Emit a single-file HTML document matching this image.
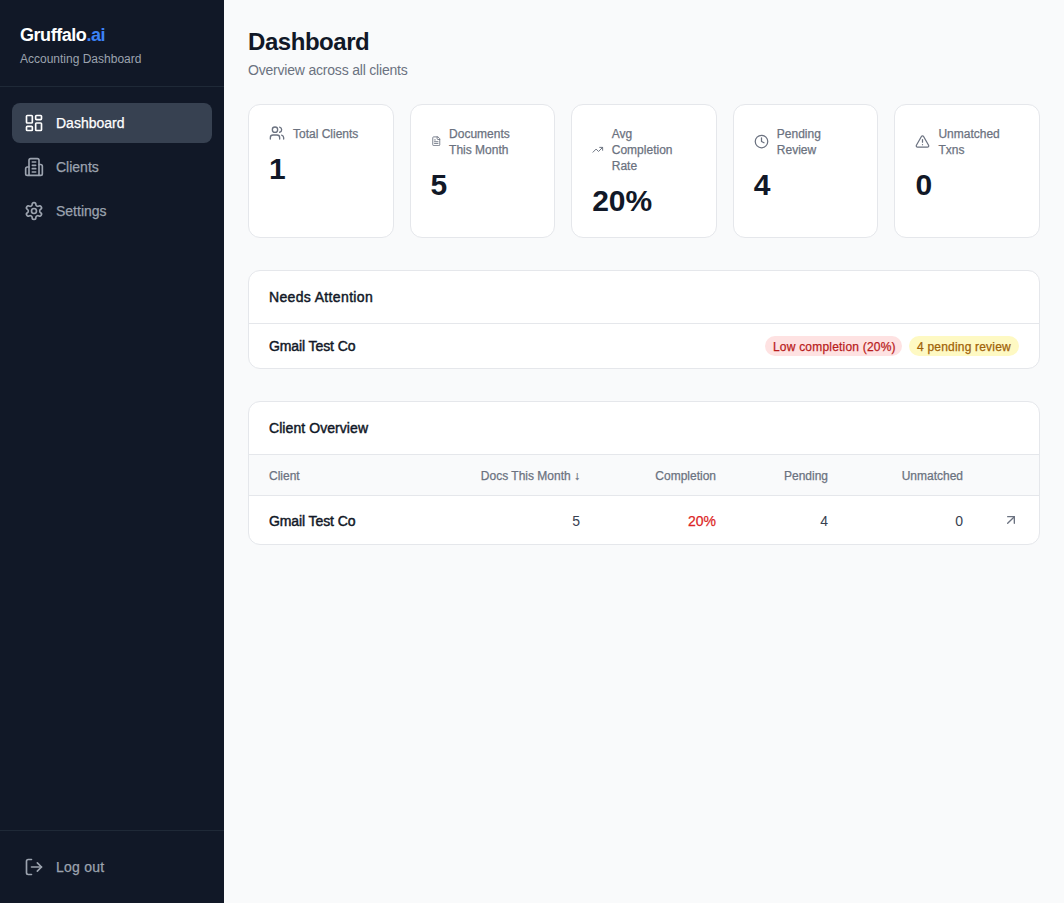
<!DOCTYPE html>
<html>
<head>
<meta charset="utf-8">
<style>
*{box-sizing:border-box;margin:0;padding:0}
html,body{width:1064px;height:903px;overflow:hidden}
body{font-family:"Liberation Sans",sans-serif;background:#f9fafb;color:#111827;position:relative}
svg{display:block;fill:none;stroke:currentColor;stroke-width:2;stroke-linecap:round;stroke-linejoin:round}
.sb{position:absolute;left:0;top:0;width:224px;height:903px;background:#111827}
.brand{position:absolute;left:20px;top:21px;letter-spacing:-0.45px;font-size:18px;line-height:28px;font-weight:bold;color:#fff}
.brand span{color:#3b82f6}
.tag{position:absolute;left:20px;top:51px;font-size:12px;line-height:16px;color:#9ca3af}
.hr1{position:absolute;left:0;top:86px;width:224px;height:1px;background:#1f2937}
.nav{position:absolute;left:12px;width:200px;height:40px;border-radius:8px;color:#9ca3af;font-size:14px;line-height:20px}
.nav.act{background:#374151;color:#fff}
.nav svg{position:absolute;left:12px;top:10px;width:20px;height:20px}
.nav .t{position:absolute;left:44px;top:10px;white-space:nowrap;-webkit-text-stroke:0.25px currentColor}
.hr2{position:absolute;left:0;top:830px;width:224px;height:1px;background:#1f2937}

.main{position:absolute;left:224px;top:0;width:840px;height:903px}
.h1{position:absolute;left:24px;top:26px;letter-spacing:-0.45px;font-size:24px;line-height:32px;font-weight:bold;color:#111827;white-space:nowrap}
.sub{position:absolute;left:24px;top:60px;letter-spacing:-0.2px;font-size:14px;line-height:20px;color:#6b7280;white-space:nowrap}

.card{position:absolute;top:104px;height:134px;background:#fff;border:1px solid #e5e7eb;border-radius:12px}
.card .lab{position:absolute;left:20px;top:21px;font-size:12px;line-height:16px;color:#6b7280}
.card .lab svg{position:absolute;color:#6b7280}
.card .lab .tx{position:absolute;white-space:nowrap;-webkit-text-stroke:0.25px currentColor}
.card .num{position:absolute;left:20px;font-size:30px;line-height:36px;font-weight:bold;color:#111827}

.panel{position:absolute;left:24px;width:792px;background:#fff;border:1px solid #e5e7eb;border-radius:12px;overflow:hidden}
.ph{position:absolute;left:20px;top:16px;font-size:14px;line-height:20px;-webkit-text-stroke:0.45px currentColor;color:#111827;white-space:nowrap}
.div{position:absolute;left:0;width:790px;height:1px;background:#e5e7eb}
.rowname{position:absolute;left:20px;font-size:14px;line-height:20px;-webkit-text-stroke:0.45px currentColor;letter-spacing:-0.1px;color:#111827;white-space:nowrap}
.badge{position:absolute;top:12px;height:20px;border-radius:10px;font-size:12px;line-height:20px;padding:1px 8px 0;white-space:nowrap;letter-spacing:0.2px;-webkit-text-stroke:0.25px currentColor}
.thead{position:absolute;left:0;top:53px;width:790px;height:40px;background:#f9fafb}
.th{position:absolute;top:13px;-webkit-text-stroke:0.25px currentColor;font-size:12px;line-height:16px;color:#6b7280;white-space:nowrap}
.td{position:absolute;font-size:14px;line-height:20px;color:#374151;white-space:nowrap}
</style>
</head>
<body>
<div class="sb">
  <div class="brand">Gruffalo<span>.ai</span></div>
  <div class="tag">Accounting Dashboard</div>
  <div class="hr1"></div>

  <div class="nav act" style="top:103px">
    <svg viewBox="0 0 24 24"><rect width="7" height="9" x="3" y="3" rx="1"/><rect width="7" height="5" x="14" y="3" rx="1"/><rect width="7" height="9" x="14" y="12" rx="1"/><rect width="7" height="5" x="3" y="16" rx="1"/></svg>
    <div class="t">Dashboard</div>
  </div>
  <div class="nav" style="top:147px">
    <svg viewBox="0 0 24 24"><path d="M6 22V4a2 2 0 0 1 2-2h8a2 2 0 0 1 2 2v18Z"/><path d="M6 12H4a2 2 0 0 0-2 2v6a2 2 0 0 0 2 2h2"/><path d="M18 9h2a2 2 0 0 1 2 2v9a2 2 0 0 1-2 2h-2"/><path d="M10 6h4"/><path d="M10 10h4"/><path d="M10 14h4"/><path d="M10 18h4"/></svg>
    <div class="t">Clients</div>
  </div>
  <div class="nav" style="top:191px">
    <svg viewBox="0 0 24 24"><path d="M12.22 2h-.44a2 2 0 0 0-2 2v.18a2 2 0 0 1-1 1.73l-.43.25a2 2 0 0 1-2 0l-.15-.08a2 2 0 0 0-2.73.73l-.22.38a2 2 0 0 0 .73 2.73l.15.1a2 2 0 0 1 1 1.72v.51a2 2 0 0 1-1 1.74l-.15.09a2 2 0 0 0-.73 2.73l.22.38a2 2 0 0 0 2.730.73l.15-.08a2 2 0 0 1 2 0l.43.25a2 2 0 0 1 1 1.73V20a2 2 0 0 0 2 2h.44a2 2 0 0 0 2-2v-.18a2 2 0 0 1 1-1.73l.43-.25a2 2 0 0 1 2 0l.15.08a2 2 0 0 0 2.73-.73l.22-.39a2 2 0 0 0-.73-2.730l-.15-.08a2 2 0 0 1-1-1.74v-.5a2 2 0 0 1 1-1.74l.15-.09a2 2 0 0 0 .73-2.73l-.22-.38a2 2 0 0 0-2.73-.73l-.15.08a2 2 0 0 1-2 0l-.43-.25a2 2 0 0 1-1-1.73V4a2 2 0 0 0-2-2z"/><circle cx="12" cy="12" r="3"/></svg>
    <div class="t">Settings</div>
  </div>

  <div class="hr2"></div>
  <div class="nav" style="top:847px">
    <svg viewBox="0 0 24 24"><path d="M9 21H5a2 2 0 0 1-2-2V5a2 2 0 0 1 2-2h4"/><polyline points="16 17 21 12 16 7"/><line x1="21" x2="9" y1="12" y2="12"/></svg>
    <div class="t" style="letter-spacing:0.25px">Log out</div>
  </div>
</div>

<div class="main">
  <div class="h1">Dashboard</div>
  <div class="sub">Overview across all clients</div>

  <div class="card" style="left:24px;width:145.6px">
    <div class="lab">
      <svg viewBox="0 0 24 24" style="left:0;top:-1px;width:16px;height:16px"><path d="M16 21v-2a4 4 0 0 0-4-4H6a4 4 0 0 0-4 4v2"/><circle cx="9" cy="7" r="4"/><path d="M22 21v-2a4 4 0 0 0-3-3.87"/><path d="M16 3.13a4 4 0 0 1 0 7.75"/></svg>
      <div class="tx" style="left:24px;top:0">Total Clients</div>
    </div>
    <div class="num" style="top:46px">1</div>
  </div>

  <div class="card" style="left:185.6px;width:145.6px">
    <div class="lab">
      <svg viewBox="0 0 24 24" style="left:0;top:9.5px;width:10.5px;height:10.5px"><path d="M15 2H6a2 2 0 0 0-2 2v16a2 2 0 0 0 2 2h12a2 2 0 0 0 2-2V7Z"/><path d="M14 2v4a2 2 0 0 0 2 2h4"/><path d="M10 9H8"/><path d="M16 13H8"/><path d="M16 17H8"/></svg>
      <div class="tx" style="left:18.5px;top:0">Documents<br>This Month</div>
    </div>
    <div class="num" style="top:62px">5</div>
  </div>

  <div class="card" style="left:347.2px;width:145.6px">
    <div class="lab">
      <svg viewBox="0 0 24 24" style="left:0;top:17.5px;width:11.6px;height:11.6px"><polyline points="22 7 13.5 15.5 8.5 10.5 2 17"/><polyline points="16 7 22 7 22 13"/></svg>
      <div class="tx" style="left:19.6px;top:0">Avg<br>Completion<br>Rate</div>
    </div>
    <div class="num" style="top:78px">20%</div>
  </div>

  <div class="card" style="left:508.8px;width:145.6px">
    <div class="lab">
      <svg viewBox="0 0 24 24" style="left:0;top:7.5px;width:15px;height:15px"><circle cx="12" cy="12" r="10"/><polyline points="12 6 12 12 16 14"/></svg>
      <div class="tx" style="left:23px;top:0">Pending<br>Review</div>
    </div>
    <div class="num" style="top:62px">4</div>
  </div>

  <div class="card" style="left:670.4px;width:145.6px">
    <div class="lab">
      <svg viewBox="0 0 24 24" style="left:0;top:7.5px;width:15px;height:15px"><path d="m21.73 18-8-14a2 2 0 0 0-3.48 0l-8 14A2 2 0 0 0 4 21h16a2 2 0 0 0 1.73-3"/><path d="M12 9v4"/><path d="M12 17h.01"/></svg>
      <div class="tx" style="left:23px;top:0">Unmatched<br>Txns</div>
    </div>
    <div class="num" style="top:62px">0</div>
  </div>

  <div class="panel" style="top:270px;height:99px">
    <div class="ph" style="letter-spacing:0.35px">Needs Attention</div>
    <div class="div" style="top:52px"></div>
    <div class="rowname" style="top:65px">Gmail Test Co</div>
    <div class="badge" style="top:65px;left:516px;width:137px;background:#fee2e2;color:#b91c1c">Low completion (20%)</div>
    <div class="badge" style="top:65px;left:660px;width:110px;background:#fef9c3;color:#a16207">4 pending review</div>
  </div>

  <div class="panel" style="top:401px;height:144px">
    <div class="ph" style="letter-spacing:0.07px">Client Overview</div>
    <div class="div" style="top:52px"></div>
    <div class="thead">
      <div class="th" style="left:20px">Client</div>
      <div class="th" style="right:459px">Docs This Month &#8595;</div>
      <div class="th" style="right:323px">Completion</div>
      <div class="th" style="right:211px">Pending</div>
      <div class="th" style="right:76px">Unmatched</div>
    </div>
    <div class="div" style="top:93px"></div>
    <div class="rowname" style="top:109px">Gmail Test Co</div>
    <div class="td" style="top:109px;right:459px">5</div>
    <div class="td" style="top:109px;right:323px;color:#dc2626;-webkit-text-stroke:0.25px #dc2626">20%</div>
    <div class="td" style="top:109px;right:211px">4</div>
    <div class="td" style="top:109px;right:76px">0</div>
    <svg viewBox="0 0 24 24" style="position:absolute;left:754px;top:110px;width:16px;height:16px;color:#6b7280"><path d="M7 7h10v10"/><path d="M7 17 17 7"/></svg>
  </div>
</div>
</body>
</html>
